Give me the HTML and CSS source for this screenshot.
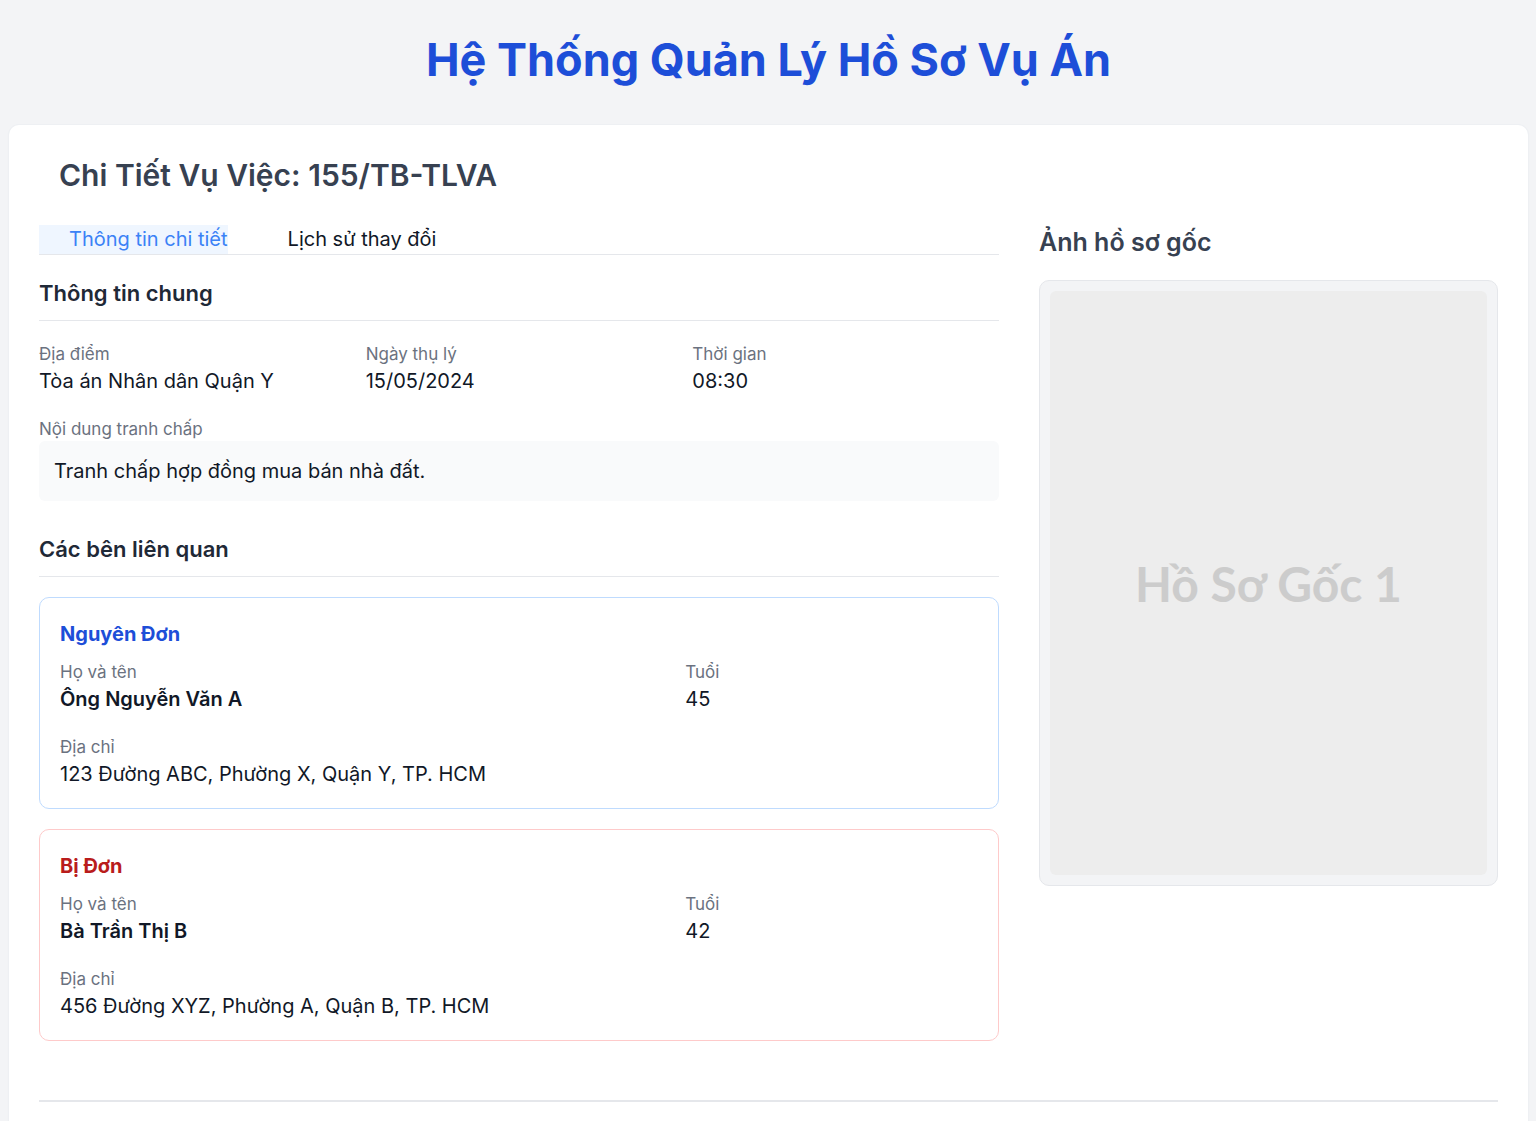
FILE: index.html
```html
<!DOCTYPE html>
<html lang="vi">
<head>
<meta charset="utf-8">
<title>Hệ Thống Quản Lý Hồ Sơ Vụ Án</title>
<link rel="stylesheet" href="styles.css">
</head>
<body>
<header class="page-header">
  <h1 class="page-title">Hệ Thống Quản Lý Hồ Sơ Vụ Án</h1>
</header>
<main class="card">
  <h2 class="case-title">Chi Tiết Vụ Việc: 155/TB-TLVA</h2>
  <div class="layout">
    <section class="left">
      <nav class="tabs">
        <span class="tab tab-active">Thông tin chi tiết</span>
        <span class="tab">Lịch sử thay đổi</span>
      </nav>
      <h3 class="section-title">Thông tin chung</h3>
      <div class="info-grid">
        <div class="field">
          <div class="label">Địa điểm</div>
          <div class="value">Tòa án Nhân dân Quận Y</div>
        </div>
        <div class="field">
          <div class="label">Ngày thụ lý</div>
          <div class="value">15/05/2024</div>
        </div>
        <div class="field">
          <div class="label">Thời gian</div>
          <div class="value">08:30</div>
        </div>
      </div>
      <div class="dispute">
        <div class="label">Nội dung tranh chấp</div>
        <div class="dispute-box">Tranh chấp hợp đồng mua bán nhà đất.</div>
      </div>
      <h3 class="section-title parties-title">Các bên liên quan</h3>
      <div class="party party-plaintiff">
        <div class="party-role">Nguyên Đơn</div>
        <div class="party-grid">
          <div class="field">
            <div class="label">Họ và tên</div>
            <div class="value strong">Ông Nguyễn Văn A</div>
          </div>
          <div class="field">
            <div class="label">Tuổi</div>
            <div class="value">45</div>
          </div>
          <div class="field span2">
            <div class="label">Địa chỉ</div>
            <div class="value">123 Đường ABC, Phường X, Quận Y, TP. HCM</div>
          </div>
        </div>
      </div>
      <div class="party party-defendant">
        <div class="party-role">Bị Đơn</div>
        <div class="party-grid">
          <div class="field">
            <div class="label">Họ và tên</div>
            <div class="value strong">Bà Trần Thị B</div>
          </div>
          <div class="field">
            <div class="label">Tuổi</div>
            <div class="value">42</div>
          </div>
          <div class="field span2">
            <div class="label">Địa chỉ</div>
            <div class="value">456 Đường XYZ, Phường A, Quận B, TP. HCM</div>
          </div>
        </div>
      </div>
    </section>
    <aside class="right">
      <h3 class="image-title">Ảnh hồ sơ gốc</h3>
      <div class="image-frame">
        <div class="image-placeholder"><span>Hồ Sơ Gốc 1</span></div>
      </div>
    </aside>
  </div>
  <div class="card-footer"></div>
</main>
</body>
</html>
```
FILE: styles.css
```css
* { box-sizing: border-box; }
html, body { margin: 0; padding: 0; }
body {
  background: #f3f4f6;
  font-family: Inter, "Noto Sans", sans-serif;
  color: #111827;
  padding: 0 8px 0 9px;
}
.page-header {
  padding: 31px 0 10px;
  text-align: center;
}
.page-title {
  margin: 0;
  font-size: 45px;
  line-height: 58px;
  font-weight: 700;
  color: #1d4ed8;
}
.card {
  margin-top: 26px;
  background: #fff;
  border-radius: 10px;
  box-shadow: 0 0 0 1px #eef0f3, 0 1px 3px rgba(0,0,0,0.05);
  padding: 30px 30px 40px;
  min-height: 1100px;
}
.case-title {
  margin: 0 0 30px 20px;
  font-size: 30px;
  line-height: 40px;
  font-weight: 600;
  color: #374151;
}
.layout {
  display: grid;
  grid-template-columns: 960px 1fr;
  gap: 40px;
}
.tabs {
  display: flex;
  border-bottom: 1px solid #e5e7eb;
}
.tab {
  font-size: 20px;
  line-height: 29px;
  color: #111827;
}
.tab-active {
  background: #eff6ff;
  color: #3b82f6;
  padding-left: 30px;
  margin-right: 60px;
}
.section-title {
  margin: 23px 0 0;
  font-size: 22px;
  line-height: 30px;
  font-weight: 600;
  color: #1f2937;
  padding-bottom: 12px;
  border-bottom: 1px solid #e5e7eb;
}
.info-grid {
  display: grid;
  grid-template-columns: repeat(3, 1fr);
  gap: 20px;
  margin-top: 21px;
}
.label {
  font-size: 17px;
  line-height: 24px;
  color: #6b7280;
}
.value {
  font-size: 20px;
  line-height: 28px;
  color: #111827;
  margin-top: 1px;
}
.value.strong { font-weight: 600; }
.dispute { margin-top: 22px; }
.dispute-box {
  margin-top: 0;
  background: #f9fafb;
  border-radius: 6px;
  padding: 16px 15px;
  font-size: 20px;
  line-height: 28px;
}
.parties-title { margin-top: 33px; }
.party {
  margin-top: 20px;
  border: 1px solid #bfdbfe;
  border-radius: 10px;
  padding: 22px 20px 20px;
}
.party-defendant { border-color: #fecaca; }
.party-role {
  font-size: 20px;
  line-height: 28px;
  font-weight: 700;
}
.party-plaintiff .party-role { color: #1d4ed8; }
.party-defendant .party-role { color: #b91c1c; }
.party-grid {
  display: grid;
  grid-template-columns: 2fr 1fr;
  column-gap: 40px;
  row-gap: 22px;
  margin-top: 12px;
}
.span2 { grid-column: 1 / -1; }
.image-title {
  margin: 1px 0 22px;
  font-size: 25px;
  line-height: 32px;
  font-weight: 600;
  color: #374151;
}
.image-frame {
  background: #f3f4f6;
  border: 1px solid #e5e7eb;
  border-radius: 10px;
  padding: 10px;
}
.image-placeholder {
  height: 584px;
  background: #ededed;
  border-radius: 6px;
  display: flex;
  align-items: center;
  justify-content: center;
}
.image-placeholder span {
  font-family: Lato, sans-serif;
  font-weight: 700;
  font-size: 48px;
  color: #cccccc;
}
.card-footer {
  margin-top: 59px;
  border-top: 2px solid #e5e7eb;
}
```
